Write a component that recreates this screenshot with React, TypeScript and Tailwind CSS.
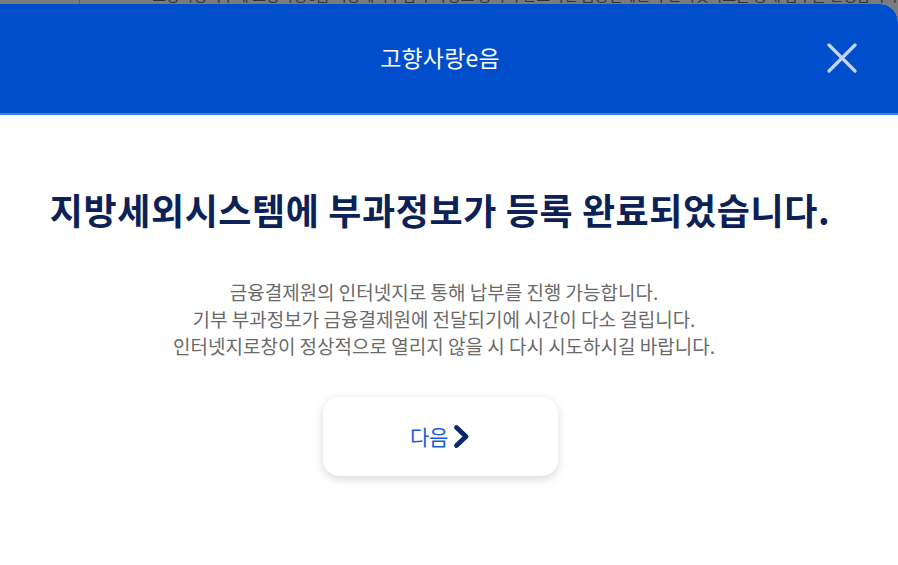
import React from "react";

const KR = { fontFamily: '"Noto Sans CJK KR", "Noto Sans", sans-serif' };

function CloseIcon() {
  return (
    <svg width="30" height="30" viewBox="0 0 30 30" fill="none">
      <path d="M2 2 L28 28 M28 2 L2 28" stroke="#c4d4f6" strokeWidth="3.2" strokeLinecap="round" />
    </svg>
  );
}

function Chevron() {
  return (
    <svg width="17" height="25" viewBox="0 0 17 25" fill="none">
      <path d="M3.5 3.5 L13 12.5 L3.5 21.5" stroke="#0b2a6e" strokeWidth="4.8" strokeLinecap="round" strokeLinejoin="round" />
    </svg>
  );
}

export default function App() {
  return (
    <div className="w-[898px] h-[565px] bg-[#7b7b7b] flex flex-col overflow-hidden" style={KR}>
      {/* page behind the dialog, only its lowest edge shows */}
      <div className="h-[4px] overflow-hidden flex shrink-0">
        <div className="w-[82px] border-r border-[#5f5f5f]" />
        <div className="pl-[72px] -mt-[14px] text-[15px] leading-[18px] text-[#333] whitespace-nowrap">
          고향사랑기부제 고향사랑e음 지방세외수입 부과정보 등록이 완료되면 금융결제원의 인터넷지로를 통해 납부를 진행합니다
        </div>
      </div>

      <div className="flex-1 w-[898px] bg-white rounded-tr-[18px] overflow-hidden flex flex-col">
        <header className="h-[111px] shrink-0 bg-[#004ecc] border-b-[2px] border-[#3f7fe6] flex items-center pr-[18px] relative">
          <h1 className="flex-1 text-center text-white text-[23px] font-normal tracking-[0.2px] -mt-[2px]">고향사랑e음</h1>
          <button className="absolute right-[41px] top-[39px]">
            <CloseIcon />
          </button>
        </header>

        <main className="flex-1 flex flex-col items-center pr-[18px]">
          <h2 className="mt-[72px] text-[36px] leading-[44px] font-bold text-[#0c2257] tracking-[0.6px] whitespace-nowrap">
            지방세외시스템에 부과정보가 등록 완료되었습니다.
          </h2>
          <div className="mt-[47px] pl-[8px] text-center text-[19px] leading-[27px] text-[#6a6a6a] tracking-[0px] whitespace-nowrap">
            <p>금융결제원의 인터넷지로 통해 납부를 진행 가능합니다.</p>
            <p>기부 부과정보가 금융결제원에 전달되기에 시간이 다소 걸립니다.</p>
            <p>인터넷지로창이 정상적으로 열리지 않을 시 다시 시도하시길 바랍니다.</p>
          </div>
          <button className="mt-[38px] w-[235px] h-[79px] rounded-[16px] bg-white shadow-[0_3px_10px_rgba(0,0,0,0.16)] flex items-center justify-center gap-[5px]">
            <span className="text-[21px] text-[#1a5ad6] tracking-[-0.3px]">다음</span>
            <Chevron />
          </button>
        </main>
      </div>
    </div>
  );
}
